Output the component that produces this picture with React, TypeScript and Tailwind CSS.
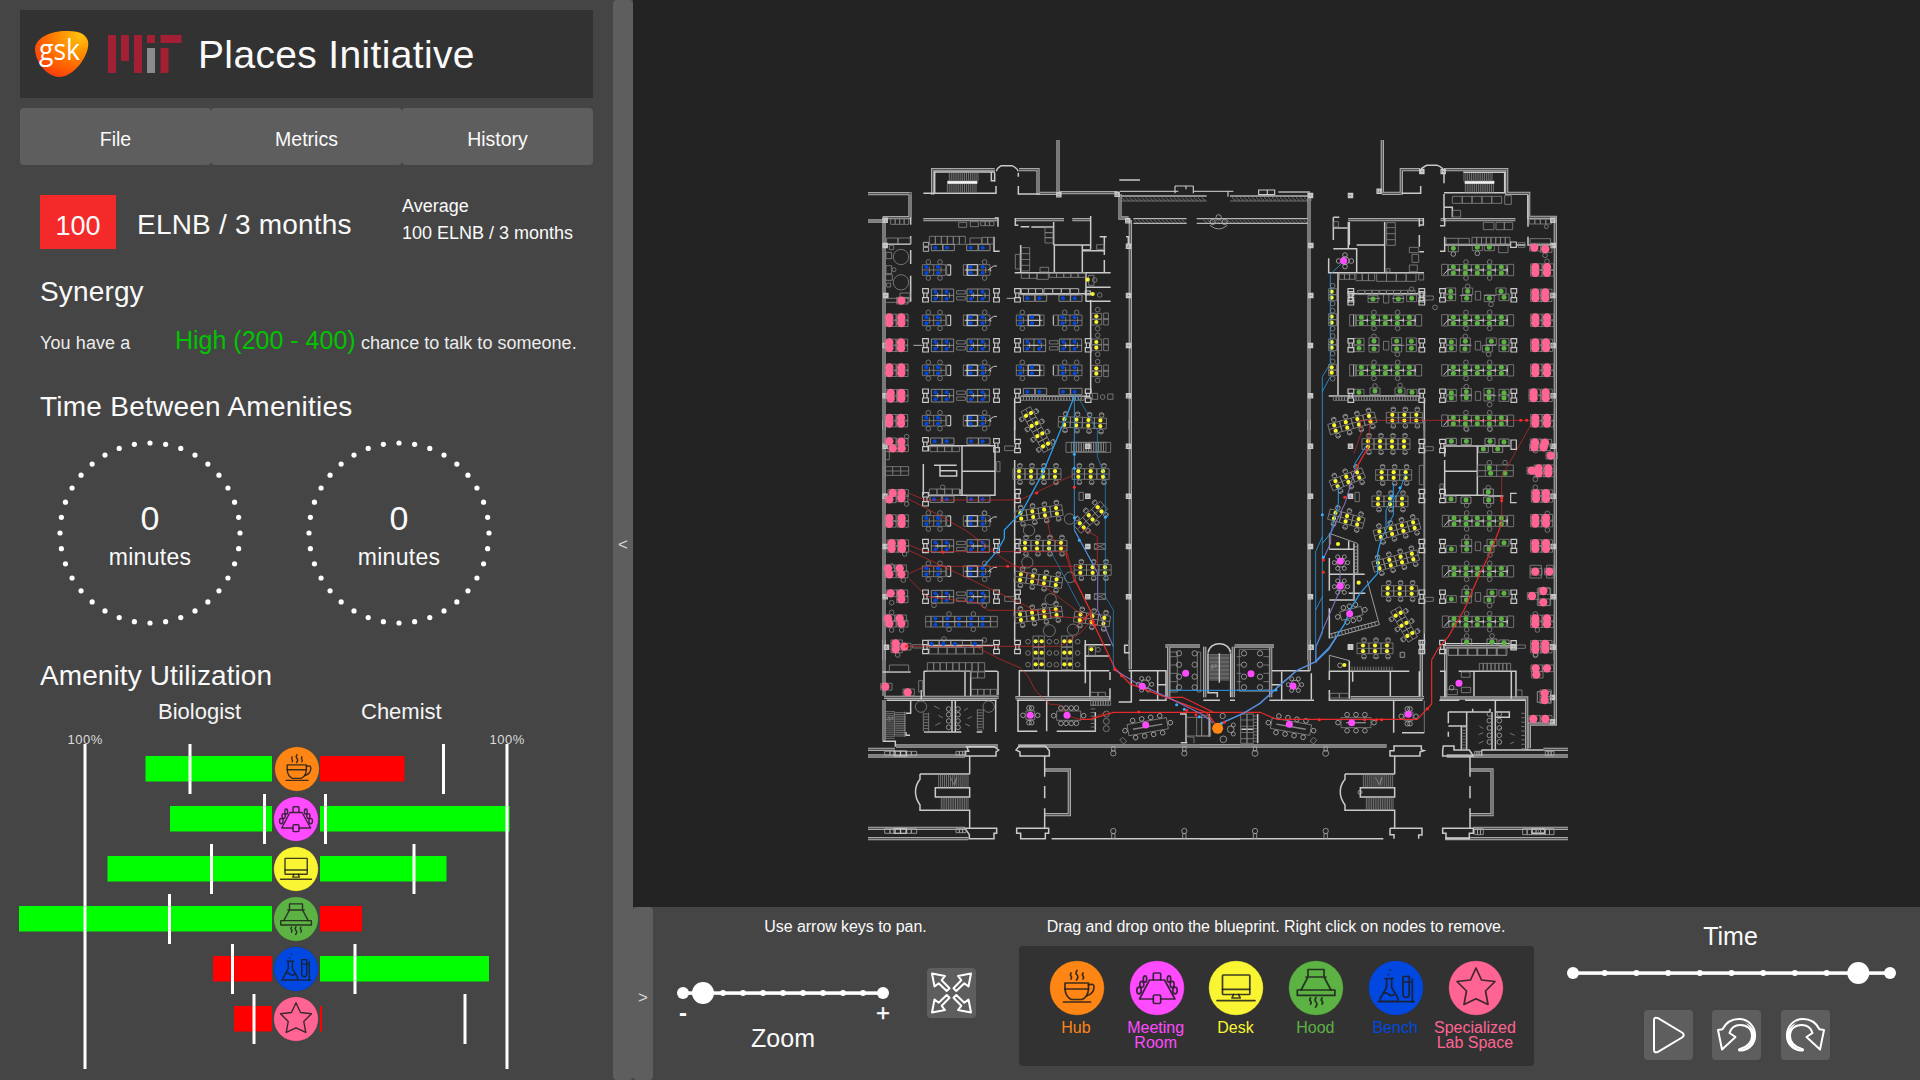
import React from "react";

type Pt = [number, number];

const COLORS = {
  hub: "#ff8514",
  meeting: "#ff4bff",
  desk: "#faf532",
  hood: "#5db244",
  bench: "#0048e0",
  lab: "#ff6492",
};

/* ---------- amenity icons, drawn around the origin in a 27.5 radius ---------- */

type Kind = keyof typeof COLORS;

function Glyph({ kind }: { kind: Kind }) {
  switch (kind) {
    case "hub":
      return (
        <>
          <path d="M-12 -5H11.5V1Q11 9 5 11.5H-5.5Q-11.5 9 -12 1Z" />
          <path d="M-12 1H11.5M-13.5 14H13.5M11.5 -3.2Q17.5 -5 17 -0.5Q16.5 6 9.5 8" />
          <path d="M-6 -15q-1.2 2 0 3.2t0 2.8M0 -17.5q-2 2.5 0 4.5t-0.6 5M6 -15q-1.2 2 0 3.2t0 2.8" />
        </>
      );
    case "meeting":
      return (
        <>
          <path d="M-3.7 -8H-7.5L-17.5 11H-3.7M3.7 11H18L7.5 -8H3.7" />
          <rect x="-3.7" y="-15" width="7.4" height="7" rx="1" />
          <rect x="-3.7" y="7" width="7.4" height="8.5" rx="1.5" />
          {[-1, 1].map((s) => (
            <g key={s}>
              <ellipse cx={12 * s} cy="-9" rx="1.7" ry="3.2" />
              <ellipse cx={15.2 * s} cy="-3.6" rx="2" ry="3" />
              <ellipse cx={18 * s} cy="2.5" rx="2.2" ry="3.3" />
            </g>
          ))}
        </>
      );
    case "desk":
      return (
        <>
          <rect x="-13.5" y="-13" width="27.3" height="19.5" rx="0.8" />
          <path d="M-13.5 1.3H13.8M-2.5 6.5L-4 10H4.2L2.7 6.5M-19 12.6H19" />
        </>
      );
    case "hood":
      return (
        <>
          <path d="M-8 -11V-18.5H8V-11M-10 -11H10M-8 -11L-15 2M8 -11L15 2" />
          <rect x="-18.7" y="2" width="37.6" height="5.4" />
          <path d="M-5.5 10q-1.4 2 0 3.2t0 3M0 9.5q-2 2.5 0 4.5t-0.4 5M6 10q-1.4 2 0 3.2t0 3" />
        </>
      );
    case "bench":
      return (
        <>
          <path d="M-18 13.6H18.2M-10.8 -9.5H-3M-9.5 -9.5V-0.5L-15.8 10.5Q-16.5 13 -14.5 13.3H0.5Q2.5 13 2 10.5L-4.3 -0.5V-9.5M-13 5.5Q-10 4 -7 6.5T-1 5.5" />
          <path d="M7 -11.5H13.2V6.5Q13 9.5 10 9.5T7 6.5ZM7 -6H13.2M16.3 -9V13.5M13.2 -6H16.3" />
          <path d="M-8 -13.5h.1M-5.7 -18h.1" />
        </>
      );
    default:
      return <path d="M0 -20L5.5 -8L19 -6.5L9.5 3L12 16.5L0 10.8L-12 16.5L-9.5 3L-19 -6.5L-5.5 -8Z" />;
  }
}

function Amenity({ kind }: { kind: Kind }) {
  return (
    <g>
      <circle r="27.3" fill={COLORS[kind]} stroke="#2a2a2a" strokeOpacity="0.5" strokeWidth="0.6" />
      <g fill="none" stroke="#1c1c1c" strokeOpacity="0.85" strokeWidth="1.7" strokeLinejoin="round" strokeLinecap="round">
        <Glyph kind={kind} />
      </g>
    </g>
  );
}

/* ---------- sidebar ---------- */

function Logos() {
  return (
    <svg width="162" height="88" viewBox="20 10 162 88">
      <defs>
        <radialGradient id="gsk" cx="0.85" cy="0.1" r="1.05">
          <stop offset="0" stopColor="#ffc20e" />
          <stop offset="0.4" stopColor="#ff8a00" />
          <stop offset="0.75" stopColor="#ff5a00" />
          <stop offset="1" stopColor="#f83a10" />
        </radialGradient>
      </defs>
      <path
        d="M66 31C80 30.5 88.500 35 88.300 44C88 58 73 77 59 77C45 76 35 60 35 49C35.500 38 50 31 66 31Z"
        fill="url(#gsk)"
      />
      <text x="39" y="60" fontFamily="'Open Sans', sans-serif" fontSize="29" textLength="41" lengthAdjust="spacingAndGlyphs" fill="#fff">
        gsk
      </text>
      <g fill="#a31f34">
        <rect x="108" y="35" width="8" height="38" />
        <rect x="121" y="35" width="8" height="26" />
        <rect x="134" y="35" width="8" height="38" />
        <rect x="147" y="35" width="8" height="8" />
        <rect x="160.5" y="35" width="21" height="8" />
        <rect x="160.5" y="48" width="8" height="25" />
      </g>
      <rect x="147" y="48" width="8" height="25" fill="#8a8b8c" />
    </svg>
  );
}

function Ring() {
  return (
    <div className="grid h-[186px] w-[186px]">
      <svg className="col-start-1 row-start-1" width="186" height="186" viewBox="-93 -93 186 186" fill="#fff">
        {Array.from({ length: 36 }, (_, i) => {
          const a = (i * Math.PI) / 18;
          return <circle key={i} cx={90 * Math.sin(a)} cy={90 * Math.cos(a)} r="2.6" />;
        })}
      </svg>
      <div className="col-start-1 row-start-1 flex flex-col items-center pt-[58px]">
        <span className="text-[34px] leading-10">0</span>
        <span className="pt-[3px] text-[23px] leading-8 tracking-[0.3px]">minutes</span>
      </div>
    </div>
  );
}

const rows: { kind: Kind; left: number; lm: number; lOk: boolean; right: number; rm?: number; rOk: boolean }[] = [
  { kind: "hub", left: 145.5, lm: 190, lOk: true, right: 404.5, rm: 443.5, rOk: false },
  { kind: "meeting", left: 170, lm: 264.5, lOk: true, right: 509.5, rm: 325.5, rOk: true },
  { kind: "desk", left: 107.5, lm: 211.5, lOk: true, right: 446.5, rm: 414, rOk: true },
  { kind: "hood", left: 19, lm: 169.5, lOk: true, right: 362, rOk: false },
  { kind: "bench", left: 213, lm: 232.5, lOk: false, right: 489, rm: 355, rOk: true },
  { kind: "lab", left: 234, lm: 254, lOk: false, right: 322, rm: 465, rOk: false },
];

function Utilization() {
  return (
    <svg width="613" height="381" viewBox="0 699 613 381" fontFamily="'Liberation Sans', Arial, sans-serif">
      <g fill="#f4f4f4" fontSize="22">
        <text x="158" y="719">Biologist</text>
        <text x="361" y="719">Chemist</text>
      </g>
      <g fill="#dcdcdc" fontSize="13" letterSpacing="0.5">
        <text x="67.5" y="744">100%</text>
        <text x="489.5" y="744">100%</text>
      </g>
      {rows.map((r, i) => {
        const y = 756 + i * 50;
        return (
          <g key={r.kind}>
            <rect x={r.left} y={y} width={272 - r.left} height="25.5" fill={r.lOk ? "#00ff00" : "#ff0000"} />
            <rect x="320" y={y} width={r.right - 320} height="25.5" fill={r.rOk ? "#00ff00" : "#ff0000"} />
            <rect x={r.lm - 1.5} y={y - 12} width="3" height="50" fill="#fff" />
            {r.rm && <rect x={r.rm - 1.5} y={y - 12} width="3" height="50" fill="#fff" />}
            <g transform={`translate(${i === 0 ? 297 : 296} ${y + 13}) scale(0.815)`}>
              <Amenity kind={r.kind} />
            </g>
          </g>
        );
      })}
      <rect x="83.5" y="744" width="3" height="325" fill="#fff" />
      <rect x="505.5" y="744" width="3" height="325" fill="#fff" />
    </svg>
  );
}

function Sidebar() {
  return (
    <aside className="flex h-full w-[633px] shrink-0 bg-[#454545]">
      <div className="flex w-[613px] flex-col pt-[10px]">
        <header className="mx-5 flex h-[88px] w-[573px] items-center bg-[#323232]">
          <Logos />
          <h1 className="pl-4 pt-px text-[39px] leading-none tracking-[0.35px] whitespace-nowrap">Places Initiative</h1>
        </header>
        <nav className="mx-5 mt-[10px] flex h-[57px] w-[573px]">
          {["File", "Metrics", "History"].map((t) => (
            <button key={t} className="flex flex-1 items-center justify-center rounded-[4px] bg-[#5e5e5e] pt-[7px] text-[19.5px] leading-none">
              {t}
            </button>
          ))}
        </nav>
        <div className="mt-[30px] flex h-[54px] pl-10">
          <div className="flex h-[54px] w-[76px] items-center justify-center bg-[#f42a2a] pt-[8px] text-[27px] leading-none">100</div>
          <div className="flex w-[266px] items-center pl-[21px] pt-[6px] text-[28px] leading-none tracking-[0.2px] whitespace-nowrap">ELNB / 3 months</div>
          <div className="-mt-[2px] pl-[20px] text-[18px] leading-[27px] whitespace-nowrap">
            <div>Average</div>
            <div>100 ELNB / 3 months</div>
          </div>
        </div>
        <h2 className="mt-[26px] h-[34px] pl-10 text-[28px] leading-[34px] tracking-[0.15px]">Synergy</h2>
        <p className="mt-[16px] flex h-[30px] items-baseline pl-10 text-[18px] leading-[30px] whitespace-nowrap text-[#ececec]">
          <span className="w-[135px] tracking-[0.1px]">You have a</span>
          <span className="w-[186px] text-[25px] text-[#00c400]">High (200 - 400)</span>
          <span className="tracking-[0.02px]">chance to talk to someone.</span>
        </p>
        <h2 className="mt-[35px] h-[34px] pl-10 text-[28px] leading-[34px] tracking-[0.25px]">Time Between Amenities</h2>
        <div className="mt-[16px] flex h-[186px] gap-[63px] pl-[57px]">
          <Ring />
          <Ring />
        </div>
        <h2 className="mt-[33px] h-[34px] pl-10 text-[28px] leading-[34px] tracking-[0.1px]">Amenity Utilization</h2>
        <div className="mt-[6px] h-[381px]">
          <Utilization />
        </div>
      </div>
      <button className="flex w-5 items-center justify-center rounded-[4px] bg-[#5e5e5e] pt-[8px] text-[17px] leading-none text-[#d8d8d8]">&lt;</button>
    </aside>
  );
}

/* ---------- blueprint ---------- */

const WALL = { stroke: "#cacaca", strokeWidth: 4.5, fill: "none" };
const THIN = { stroke: "#868686", strokeWidth: 2.4, fill: "none" };

function Double({ d }: { d: string }) {
  return (
    <g fill="none">
      <path d={d} stroke="#a8a8a8" strokeWidth="10" />
      <path d={d} stroke="#565656" strokeWidth="3.5" />
    </g>
  );
}

const box = (x: number, y: number, w: number, h: number) => `M${x} ${y}h${w}v${h}h${-w}z`;
const ring = (x: number, y: number, r = 7) => `M${x - r} ${y}a${r} ${r} 0 1 0 ${2 * r} 0a${r} ${r} 0 1 0 ${-2 * r} 0`;

function Dots({ at, fill, r }: { at: Pt[]; fill: string; r: number }) {
  return (
    <g fill={fill}>
      {at.map(([x, y], i) => (
        <circle key={i} cx={x} cy={y} r={r} />
      ))}
    </g>
  );
}

const pairs = (xs: number[], y: number, dy: number): Pt[] => xs.flatMap((x): Pt[] => [[x, y - dy], [x, y + dy]]);

/* open-plan desk group: n columns with two facing seats each */
function Cluster({ x, y, n, a = 0, p = 36 }: { x: number; y: number; n: number; a?: number; p?: number }) {
  const xs = Array.from({ length: n }, (_, i) => (i - (n - 1) / 2) * p);
  return (
    <g transform={`translate(${x} ${y}) rotate(${a})`}>
      <path {...THIN} d={xs.map((v) => box(v - p / 2, -16, p, 32)).join("") + `M${xs[0] - p / 2} 0H${xs[n - 1] + p / 2}`} />
      <path {...THIN} stroke="#9a9a9a" d={xs.map((v) => ring(v + 3, -25) + ring(v + 3, 25) + `M${v - 4} -28h14M${v - 4} 28h14`).join("")} />
      <Dots at={pairs(xs, 0, 8.5)} fill={COLORS.desk} r={6.3} />
    </g>
  );
}

/* storage units bounding a bay */
const cab = (x: number, y: number) => box(x, y - 20, 17, 13) + box(x, y + 7, 17, 13) + `M${x + 3} ${y - 7}v14M${x + 13} ${y - 7}v14`;

function BlueA({ y, mirror = false }: { y: number; mirror?: boolean }) {
  const xs = mirror ? [481, 516, 608, 644] : [199, 234, 332, 368];
  return (
    <g>
      <path
        {...THIN}
        d={
          [0, 1].map((k) => box(xs[2 * k] - 12, y - 16, 70, 32) + `M${xs[2 * k] - 12} ${y}h70M${xs[2 * k] + 22} ${y - 16}v32`).join("") +
          xs.filter((_, i) => i !== (mirror ? 1 : 2)).map((v) => ring(v + 6, y - 24) + ring(v + 6, y + 24) + `M${v + 9} ${y - 10}v20`).join("") +
          box(mirror ? 540 : 260, y - 16, 12, 32) + box(mirror ? 580 : 310, y - 16, 14, 32)
        }
      />
      <path
        {...WALL}
        strokeWidth={3}
        d={
          mirror
            ? `M505 ${y - 16}h34v32h-34zM505 ${y}h42M580 ${y - 14}v28`
            : `M322 ${y - 16}h30v32h-30zM314 ${y}h38M262 ${y - 15}h10v30h-10M385 ${y}l16 -12h10M392 ${y - 2}v6`
        }
      />
      <Dots at={pairs(xs, y, 9)} fill={COLORS.bench} r={6} />
    </g>
  );
}

function BlueB({ y, right = false }: { y: number; right?: boolean }) {
  const xs = right ? [502, 538, 610, 644] : [226, 260, 333, 368];
  return (
    <g>
      <path
        {...THIN}
        stroke="#a0a0a0"
        d={[0, 2].map((k) => box(xs[k] - 12, y - 19, 67, 38) + `M${xs[k] - 12} ${y}h67M${xs[k] + 20} ${y - 19}v38M${xs[k] + 7} ${y - 8}v16M${xs[k] + 42} ${y - 8}v16`).join("")}
      />
      <path {...THIN} d={box(xs[1] + 30, y - 14, 26, 10) + box(xs[1] + 30, y + 4, 26, 10)} />
      <path {...WALL} strokeWidth={3.5} d={right ? cab(464, y) + cab(676, y) : cab(188, y) + cab(401, y)} />
      <path {...WALL} strokeWidth={3} d={`M${xs[0]} ${y}h34M${xs[2]} ${y}h34`} />
      <Dots at={pairs(xs, y, 10.5)} fill={COLORS.bench} r={6} />
    </g>
  );
}

function BlueSingle({ y, xs }: { y: number; xs: number[] }) {
  return (
    <g>
      <path {...THIN} stroke="#a0a0a0" d={xs.map((v) => box(v - 12, y - 10, 34, 19)).join("")} />
      <Dots at={xs.map((v): Pt => [v, y])} fill={COLORS.bench} r={6} />
    </g>
  );
}

function GreenFull({ y, xs, rightBlock = false }: { y: number; xs: number[]; rightBlock?: boolean }) {
  const a = xs[0] - 15;
  const w = xs[xs.length - 1] - xs[0] + 30;
  return (
    <g>
      <path
        {...THIN}
        d={
          box(a - 20, y - 17, 18, 34) +
          box(a, y - 16, w, 32) +
          `M${a} ${y}h${w}` +
          xs.map((v) => `M${v + 18} ${y - 16}v32`).join("") +
          box(a + w + 4, y - 17, 18, 34) +
          ring(xs[1] + 2, y - 24) +
          ring(xs[1] + 2, y + 24) +
          ring(xs[3] + 1, y - 24) +
          ring(xs[3] + 1, y + 24)
        }
      />
      <path
        {...WALL}
        strokeWidth={3}
        d={xs.map((v) => `M${v + 4} ${y}h14M${v + 18} ${y - 5}v10`).join("") + (rightBlock ? `M${a - 14} ${y + 14}l14 -16h8` : `M${a - 8} ${y - 16}v32`)}
      />
      <Dots at={pairs(xs, y, 9)} fill={COLORS.hood} r={7.5} />
    </g>
  );
}

function GreenMixed({ y, pts, a, b }: { y: number; pts: Pt[]; a: number; b: number }) {
  return (
    <g>
      <path
        {...THIN}
        d={
          pts.map(([px, py]) => box(px - 15, py - 10, 30, 20)).join("") +
          box((a + b) / 2, y - 12, 16, 26) +
          ring(pts[2] ? pts[2][0] : a + 70, y - 27) +
          ring(pts[2] ? pts[2][0] + 70 : a + 140, y + 27)
        }
      />
      <path {...WALL} stroke="#aaa" strokeWidth={2.5} d={`M${a + 60} ${y}h36M${b - 80} ${y}h36`} />
      <path {...WALL} strokeWidth={3.5} d={cab(a, y) + cab(b, y)} />
      <Dots at={pts} fill={COLORS.hood} r={7.5} />
    </g>
  );
}

function Pink({ at }: { at: Pt[] }) {
  return (
    <g>
      <path {...THIN} d={at.map(([x, y]) => box(x - 14, y - 10, 34, 20)).join("")} />
      <Dots at={at} fill={COLORS.lab} r={12.5} />
    </g>
  );
}

const pinkRow = (y: number, a: number, b: number): Pt[] => pairs([a, b], y, 8.5);

/* horizontal strip of equal boxes */
const strip = (x: number, y: number, w: number, h: number, n: number) =>
  Array.from({ length: n }, (_, i) => box(x + (i * w) / n, y, w / n, h)).join("");

/* dense parallel treads */
const treads = (x: number, y: number, w: number, h: number, n: number) =>
  Array.from({ length: n }, (_, i) => `M${x + (i * w) / (n - 1)} ${y}v${h}`).join("");
const rungs = (x: number, y: number, w: number, h: number, n: number) =>
  Array.from({ length: n }, (_, i) => `M${x} ${y + (i * h) / (n - 1)}h${w}`).join("");

/* conference table with chairs on both sides */
function Conference({ x, y, a = 0, n = 4, w = 110, h = 30 }: { x: number; y: number; a?: number; n?: number; w?: number; h?: number }) {
  const xs = Array.from({ length: n }, (_, i) => (i - (n - 1) / 2) * ((w - 10) / n));
  return (
    <g transform={`translate(${x} ${y}) rotate(${a})`}>
      <path {...THIN} d={box(-w / 2, -h / 2, w, h)} />
      <path {...THIN} stroke="#b0b0b0" d={xs.map((v) => ring(v, -h / 2 - 9) + ring(v, h / 2 + 9)).join("") + ring(-w / 2 - 9, 0) + ring(w / 2 + 9, 0)} />
      {w > 80 && <path {...THIN} strokeWidth={4} d={`M${-w / 2 + 15} 0h${w - 30}`} />}
    </g>
  );
}

function Round({ x, y }: { x: number; y: number }) {
  return (
    <path
      {...THIN}
      stroke="#b0b0b0"
      d={ring(x, y, 13) + [0, 60, 120, 180, 240, 300].map((d) => ring(x + 20 * Math.cos((d * Math.PI) / 180), y + 20 * Math.sin((d * Math.PI) / 180), 6)).join("")}
    />
  );
}

function Column({ at }: { at: Pt[] }) {
  return <path {...WALL} strokeWidth={3.5} d={at.map(([x, y]) => box(x - 7, y - 6, 13, 13) + box(x - 3, y - 3, 6, 6)).join("")} />;
}

function WestTop() {
  return (
    <g>
      <Double d="M24 191H154M150 187V262M68 263H154M24 273H70M72 263V900M218 194V119H404M477 119H534V190H594M594 30V190M596 188H772M780 192V264H806M811 270V900M190 269H413M466 269H612M637 269H690" />
      <path {...WALL} d="M224 190V126H405M190 190H408V168M404 128V155M394 128V152H406M475 128V140M475 168V192H540M410 124C408 118 416 112 424 107H456C466 112 474 118 474 124M692 258V358M692 510V790M464 808V900M402 320V364H419M152 262V284M152 318V343M152 360V402M152 437V515M76 343H152M482 290H508M514 291H581M581 276V345M691 345H583V428M583 345H667V428M667 360H692M667 362H733V375M733 390V428M464 428H752M678 430V515M678 472H752M678 514H752M719 320H740M733 320V365M798 320H805V345M482 345V428M480 491H692M482 799H690M778 150H840M475 286H466V264M404 264H414V290" />
      <path stroke="#f4f4f4" strokeWidth="9" d="M262 157H352" />
      <path
        {...THIN}
        d={
          treads(268, 128, 86, 26, 16) + treads(262, 162, 86, 26, 16) + strip(92, 265, 54, 18, 4) + box(80, 324, 33, 18) + box(115, 324, 36, 18) +
          strip(208, 319, 108, 24, 6) + box(330, 324, 35, 18) + strip(366, 322, 34, 20, 2) + box(296, 277, 24, 15) + box(331, 275, 24, 15) +
          strip(362, 275, 40, 12, 3) + ring(123, 381, 23) + ring(123, 457, 23) + box(78, 367, 17, 19) + box(78, 407, 17, 24) + ring(102, 419, 6) +
          box(88, 346, 13, 13) + box(77, 434, 20, 17) + box(80, 459, 12, 12) + box(120, 489, 30, 14) + box(76, 505, 72, 12)
        }
      />
      <path
        {...THIN}
        d={
          box(555, 293, 24, 15) + box(555, 308, 24, 15) + box(555, 323, 24, 16) + box(484, 353, 25, 70) + rungs(484, 371, 25, 35, 3) +
          box(466, 373, 14, 44) + strip(484, 430, 48, 15, 2) + box(530, 430, 35, 18) + strip(568, 429, 108, 13, 5) + box(540, 412, 26, 14) +
          box(710, 344, 22, 14) + ring(704, 450, 7) + ring(719, 495, 7) + box(686, 436, 16, 30) + box(697, 790, 16, 18) + ring(728, 801, 7) +
          box(743, 792, 16, 16) + strip(482, 799, 190, 12, 22)
        }
      />
      <path {...WALL} stroke="#b0b0b0" strokeWidth={3} d={strip(484, 476, 64, 18, 3) + strip(552, 476, 104, 18, 4) + box(190, 337, 16, 12) + box(190, 352, 16, 12) + "M440 505H464M160 646H188"} />
      {[559, 576, 636, 653, 715, 731].map((y, i) => (
        <path key={y} {...THIN} d={box(695, y - 9, 30, 18) + box(731, y - 10, 14, 19) + ring(713, i % 2 ? y + 20 : y - 20, 7)} />
      ))}
      <Column at={[[76, 346], [76, 270], [78, 496], [76, 646], [76, 797], [806, 348], [806, 496], [806, 646], [806, 797], [597, 194], [772, 192], [804, 272]]} />
      <BlueSingle y={353} xs={[226, 261, 332, 368]} />
      {[420, 571, 721, 872].map((y) => (
        <BlueA key={y} y={y} />
      ))}
      {[496, 646, 797].map((y) => (
        <BlueB key={y} y={y} />
      ))}
      <path {...WALL} strokeWidth={3.5} d={cab(464, 496) + box(676, 483, 15, 12) + cab(464, 797) + cab(676, 797)} />
      <BlueSingle y={505} xs={[502, 538, 609, 644]} />
      <BlueA y={571} mirror />
      <BlueB y={646} right />
      <BlueA y={721} mirror />
      <BlueSingle y={785} xs={[502, 538, 609, 644]} />
      <Dots fill={COLORS.desk} r={6.3} at={[[683, 449], [698, 492], [709, 559], [709, 576], [709, 636], [709, 653], [709, 715], [709, 731]]} />
      <Pink at={[[124, 512], ...pinkRow(571, 88, 124), ...pinkRow(646, 88, 123), ...pinkRow(721, 88, 124), ...pinkRow(797, 92, 124), ...pinkRow(872, 88, 123)]} />
    </g>
  );
}

function WestMid() {
  return (
    <g transform="translate(0 870)">
      <Double d="M72 0V720M811 0V720" />
      <path {...WALL} d="M464 0V65M464 120V665M190 132V225M205 77H405V226H205M306 77V226M306 154H405M222 136H290M238 152H290V168H240V138M205 77V92M300 208V222M676 672V790M676 674H752M804 676H794V698H808" />
      <path
        {...THIN}
        d={
          strip(210, 80, 88, 15, 4) + strip(208, 207, 92, 18, 4) + box(76, 140, 70, 26) + "M98 140v26M122 140v26M76 153h70" + box(76, 95, 12, 24) +
          box(618, 67, 134, 30) + strip(634, 67, 104, 28, 14) + box(657, 217, 13, 24) + ring(629, 297, 16) + ring(507, 331, 17) + ring(502, 427, 17) +
          ring(630, 472, 16) + ring(572, 538, 17) + ring(568, 632, 18) + ring(639, 629, 17) + box(703, 371, 33, 17) + box(703, 521, 33, 17) +
          "M703 371l33 17M703 388l33 -17M703 521l33 17M703 538l33 -17" + strip(208, 682, 160, 20, 6) + box(158, 674, 30, 10) + box(434, 78, 30, 14) +
          box(434, 530, 30, 14) + box(410, 125, 10, 30) + box(686, 680, 20, 26) + ring(714, 689, 7)
        }
      />
      <path
        {...THIN}
        d={[[140, 50], [248, 202], [140, 252], [373, 280], [134, 402], [130, 480], [95, 438], [222, 556], [373, 556], [95, 548], [267, 582], [267, 628], [340, 582], [340, 628], [95, 577], [95, 630], [125, 630], [252, 657], [373, 660], [113, 705]]
          .map(([x, y]) => ring(x, y, 7))
          .join("")}
      />
      <path
        {...WALL}
        strokeWidth={3.5}
        d={cab(188, 73) + cab(401, 76) + cab(188, 238) + cab(464, 78) + cab(464, 228) + cab(464, 378) + cab(464, 530) + cab(464, 681) + cab(401, 681) + cab(188, 681) + "M205 676H400M205 661H370"}
      />
      <BlueSingle y={64} xs={[224, 260, 333, 368]} />
      <BlueSingle y={238} xs={[222, 260, 333, 368]} />
      <BlueA y={303} />
      <BlueB y={378} />
      <BlueA y={454} />
      <BlueB y={530} />
      <path {...THIN} d={strip(213, 589, 178, 32, 5) + "M197 605H412" + box(197, 589, 16, 32) + box(392, 589, 20, 32)} />
      <path {...WALL} strokeWidth={3} stroke="#a8a8a8" d="M226 605H390" />
      <Dots fill={COLORS.bench} r={6} at={pairs([226, 262, 297, 333, 368], 605, 9.5)} />
      <BlueSingle y={671} xs={[215, 250, 285, 345]} />
      <Cluster x={667} y={8} n={4} a={2} />
      <Cluster x={531} y={29} n={4} a={61} p={35} />
      <Cluster x={531} y={162} n={4} />
      <Cluster x={692} y={162} n={3} p={37} />
      <Cluster x={536} y={280} n={4} a={-8} />
      <Cluster x={692} y={292} n={3} a={-42} />
      <Cluster x={549} y={377} n={4} />
      <Cluster x={698} y={450} n={3} p={37} />
      <Cluster x={535} y={479} n={4} a={8} />
      <Cluster x={535} y={584} n={4} a={-8} />
      <Cluster x={696} y={597} n={3} a={8} />
      {[664, 698, 733].map((y) => (
        <g key={y}>
          <path {...THIN} d={[536, 621].map((x) => box(x - 17, y - 16, 34, 32) + `M${x} ${y - 16}v32` + ring(x - 32, y + 1) + ring(x + 32, y + 1)).join("")} />
          <Dots fill={COLORS.desk} r={6.3} at={[[527, y], [545, y], [613, y], [630, y]]} />
        </g>
      ))}
      <Dots fill={COLORS.desk} r={6.3} at={[[694, 688]]} />
      <Column at={[[76, 78], [76, 228], [76, 379], [76, 530], [80, 681], [806, 78], [806, 228], [806, 379], [806, 530], [684, 78], [684, 228], [684, 379], [684, 530]]} />
      <Pink
        at={[
          [88, 64], [124, 65], [98, 85], [125, 85], [98, 219], [125, 219], [88, 238], [124, 235],
          ...pinkRow(303, 88, 125), ...pinkRow(378, 95, 126),
          [84, 445], [88, 463], [119, 445], [124, 463], [92, 520], [123, 520], [124, 538], [84, 595], [88, 611], [119, 595], [124, 611],
          [107, 670], [107, 688], [133, 680],
        ]}
      />
    </g>
  );
}

function WestBottom() {
  return (
    <g transform="translate(0 1530)">
      <Double d="M72 0V168M811 0V88M72 172H416M466 173H750M72 180V302M108 318H414M474 318H1140M24 328H105M24 348H315M24 565H315M24 596H325M916 18H1020M926 20V172M554 390H628V524H554" />
      <path {...WALL} d="M192 93V168M192 94H332M315 94V168M332 94V168M414 94V166M374 94H412M68 96H152M476 92H748M478 94V168M565 94V170M690 94V172M184 178V150M80 181H410M276 181V276M286 181V276M192 276H304M350 276H367M407 181V276M474 180V274H532M590 274H706V216M560 182V274M470 181H752M750 96V120M750 145V178M676 0V94M676 48H750M806 92H920M776 186H814V92M893 92V180M918 92V180M838 181H920M893 134H920M152 182V220H138M138 276V286H150M68 304H106V320M320 320H402L416 330L408 336V348H316V334H326ZM478 318H556L568 332V348H480V336L468 330ZM329 350V403M554 350V410M554 438V475M554 505V565M315 565H410V580H402V596H328V584ZM470 565H566V580H556V596H482V580H470ZM180 402H329M180 402V418C162 440 162 470 180 495V511H329V565M226 443H329V471H226ZM960 222H980M978 222V308M962 308H982M1048 222V290M575 596H1140" />
      <path
        {...THIN}
        d={
          box(88, 75, 58, 20) + strip(202, 68, 172, 26, 9) + strip(332, 96, 42, 18, 2) + strip(334, 148, 76, 18, 4) + box(176, 122, 12, 34) +
          rungs(76, 215, 28, 80, 14) + rungs(106, 218, 32, 70, 14) + "M104 215V290M134 215V290" + ring(183, 200, 17) + ring(386, 200, 17) +
          rungs(192, 222, 14, 52, 7) + rungs(352, 210, 16, 60, 8) +
          "M190 218V274M206 218V274M352 208V268M370 208V268M222 198l16 8M235 226l14 8M226 256l16 -8M324 204l-12 8M336 230l-14 6M330 258l-14 -6" +
          strip(692, 182, 60, 14, 8) + rungs(692, 196, 14, 76, 8) + strip(692, 157, 44, 14, 2) + [0, 1, 2].map((k) => ring(739, 222 + k * 22, 9)).join("") +
          treads(236, 404, 88, 38, 16) + treads(244, 474, 80, 36, 16) + box(930, 36, 22, 120) + rungs(930, 50, 22, 100, 5) + box(1012, 36, 10, 120)
        }
      />
      <path
        {...THIN}
        stroke="#a8a8a8"
        d={
          [207, 224, 243, 262].map((y) => ring(266, y, 7) + ring(294, y, 7)).join("") +
          [40, 74, 110, 142].map((y) => ring(957, y, 8) + ring(1004, y, 8)).join("") +
          [760, 973].map((x) => ring(x, 340, 8) + box(x - 5, 320, 10, 13) + ring(x, 573, 8) + box(x - 5, 581, 10, 14)).join("") +
          strip(74, 334, 96, 13, 6) + strip(288, 334, 30, 12, 3) + strip(74, 566, 96, 14, 6) + strip(288, 566, 30, 12, 3)
        }
      />
      <path {...WALL} strokeWidth={3} d={box(102, 333, 38, 15) + box(102, 566, 38, 14) + "M121 333v15M121 566v14"} />
      <path {...THIN} d="M270 410l12 24l8 -22l-6 24M1052 86l20 -8M80 240l8 -10v12l10 -12v10" />
      <Conference x={511} y={226} w={26} h={26} n={2} />
      <Conference x={626} y={227} w={72} h={28} n={4} />
      <Conference x={863} y={260} a={-10} w={120} h={34} n={4} />
      <Round x={855} y={133} />
      <path {...THIN} d={box(980, 232, 45, 56) + box(1025, 226, 22, 62) + "M980 290L1002 292V310M788 292l12 12l-9 8l-12 -12z"} />
      <Pink at={[[76, 140], [143, 157]]} />
    </g>
  );
}

function EastTop() {
  return (
    <g transform="translate(1290 0)">
      <Double d="M334 194V119H390M462 119H650V190H716V262H796V900M277 30V186M57 188V900M174 269H400M452 269H676M276 190H334" />
      <path {...WALL} d="M520 127H644V188H462M334 190H392V168M392 118V130M462 128V160M462 192V232H487V262M462 232V270M392 122C392 114 402 110 410 106H442C452 110 460 116 460 122M714 195V290M714 320V345H790M388 264V290M400 264V285H390M464 264V287H450M130 262V330M130 262H148M132 294H172M130 356H200V428M175 276V356M200 345H284V276M178 276V345M284 345V428H116V385M284 428H402M388 315V350M388 365H402M464 320V364H450M466 345H660M680 345H706M174 491H384M116 798H390M144 430V795M403 808V900" />
      <path stroke="#f4f4f4" strokeWidth="9" d="M524 157H613" />
      <path
        {...THIN}
        d={
          treads(522, 129, 84, 26, 16) + treads(526, 162, 84, 26, 16) + strip(487, 199, 148, 21, 5) + box(644, 197, 20, 26) + box(488, 241, 24, 20) +
          box(580, 277, 32, 22) + strip(618, 277, 50, 22, 2) + box(290, 278, 26, 68) + rungs(290, 293, 26, 36, 3) + box(358, 352, 28, 16) +
          box(366, 373, 20, 24) + box(358, 405, 24, 20) + strip(148, 432, 46, 16, 3) + strip(198, 430, 56, 22, 3) + strip(260, 430, 118, 24, 4) +
          box(386, 432, 15, 18) + strip(203, 481, 172, 13, 8) + strip(130, 800, 42, 11, 5) + strip(190, 799, 196, 12, 24) +
          strip(546, 322, 114, 20, 8) + box(468, 325, 70, 17) + "M505 325v17" + strip(718, 268, 66, 14, 4) + box(720, 326, 62, 14) +
          ring(769, 290, 6) + ring(765, 376, 7) + ring(771, 394, 7) + box(131, 275, 14, 16) + box(404, 498, 26, 12) + box(685, 338, 20, 14) +
          box(626, 342, 28, 26) + box(290, 416, 10, 10)
        }
      />
      <path {...THIN} stroke="#b0b0b0" d={ring(165, 392, 12) + ring(165, 375) + ring(165, 410) + ring(146, 393) + ring(184, 393) + ring(490, 372) + ring(562, 370)} />
      {[485, 503, 560, 578, 636, 653, 712, 728].map((y, i) => (
        <path key={y} {...THIN} d={box(116, y - 9, 24, 18) + ring(128, i % 2 ? y + 18 : y - 18, 7)} />
      ))}
      <path {...WALL} strokeWidth={3.5} d={cab(174, 496) + cab(387, 496) + cab(174, 797) + cab(387, 797) + box(662, 336, 17, 16)} />
      <GreenMixed y={505} a={174} b={387} pts={[[249, 507], [325, 507], [365, 505]]} />
      <GreenFull y={571} xs={[214, 250, 286, 322, 358]} />
      <GreenMixed y={646} a={174} b={387} pts={[[207, 635], [207, 655], [252, 633], [252, 656], [320, 633], [320, 656], [364, 634], [364, 655]]} />
      <GreenFull y={721} xs={[214, 250, 286, 322, 358]} />
      <path
        {...THIN}
        d={[[207, 787], [255, 783], [330, 783], [366, 787], [490, 355], [562, 352], [598, 352]].map(([x, y]) => box(x - 15, y - 9, 30, 19)).join("") + ring(255, 768) + ring(330, 766)}
      />
      <Dots fill={COLORS.hood} r={7.5} at={[[207, 787], [255, 783], [330, 783], [366, 787], [490, 355], [562, 352], [598, 352]]} />
      {[420, 571, 721, 872].map((y) => (
        <GreenFull key={y} y={y} rightBlock xs={[490, 526, 562, 598, 634]} />
      ))}
      <GreenMixed y={496} a={449} b={663} pts={[[482, 484], [482, 502], [533, 484], [530, 505], [598, 505], [633, 484], [642, 502]]} />
      <GreenMixed y={646} a={449} b={663} pts={[[484, 636], [484, 655], [526, 634], [525, 656], [604, 634], [592, 656], [642, 636], [642, 655]]} />
      <GreenMixed y={797} a={449} b={663} pts={[[484, 788], [484, 804], [529, 785], [529, 803], [597, 785], [597, 803], [642, 788], [642, 804]]} />
      <Cluster x={187} y={880} n={4} a={-15} />
      <Cluster x={343} y={863} n={3} />
      <Dots fill={COLORS.desk} r={6.3} at={[[125, 485], [125, 503], [125, 560], [125, 578], [125, 636], [125, 653], [125, 712], [125, 728]]} />
      <Column at={[[62, 196], [182, 196], [268, 183], [63, 346], [63, 496], [62, 646], [62, 797], [789, 270], [790, 346], [789, 496], [790, 646], [790, 797], [396, 124], [460, 124]]} />
      <Pink
        at={[
          [733, 353], [766, 357],
          ...pinkRow(420, 736, 771), ...pinkRow(496, 736, 766), ...pinkRow(571, 736, 771), ...pinkRow(646, 736, 768),
          ...pinkRow(721, 736, 771), ...pinkRow(796, 731, 767), ...pinkRow(872, 736, 771),
        ]}
      />
    </g>
  );
}

function EastMid() {
  const full = [492, 528, 562, 598, 634];
  return (
    <g transform="translate(1290 870)">
      <Double d="M57 0V720M796 0V720" />
      <path {...WALL} stroke="#8c8c8c" strokeWidth={6} d="M403 0V640" />
      <path {...WALL} d="M464 78H562V226H464V120M464 154H562M464 78V110M464 226H596M480 78H660M596 228H640M118 388H192M192 370V540H118M118 414V512M118 463H224M118 565V655M176 362V386M176 520H226M403 640V700" />
      <path {...WALL} stroke="#9c9c9c" strokeWidth={3} d="M118 388V340L202 370V460M118 655L268 614L232 482M190 460V540M120 642L262 604" />
      <path {...THIN} stroke="#9c9c9c" d={"M192 372v90M204 372v90" + rungs(192, 380, 12, 78, 9) + Array.from({ length: 14 }, (_, i) => `M${124 + i * 10} ${640 - i * 2.6}l3 12`).join("")} />
      <path
        {...THIN}
        d={
          strip(475, 684, 176, 22, 6) + box(388, 136, 14, 58) + box(195, 217, 13, 28) + box(330, 697, 13, 15) + box(562, 135, 108, 34) +
          "M562 152h108M586 135v34M620 135v34" + box(720, 436, 34, 38) + box(770, 436, 20, 38) + box(742, 506, 40, 50) + box(404, 80, 26, 12) +
          box(404, 532, 26, 12) + box(680, 675, 26, 10) + box(450, 192, 10, 14)
        }
      />
      <path
        {...THIN}
        d={[[530, 28], [600, 28], [598, 128], [645, 128], [595, 203], [530, 256], [596, 256], [736, 92], [736, 178], [736, 202], [772, 280], [772, 330], [736, 582], [736, 706], [530, 648], [606, 648], [742, 630]]
          .map(([x, y]) => ring(x, y, 7))
          .join("")}
      />
      <path
        {...WALL}
        strokeWidth={3.5}
        d={cab(387, 78) + cab(387, 228) + cab(387, 378) + cab(387, 530) + cab(387, 681) + cab(449, 78) + cab(449, 228) + cab(449, 681) + box(663, 60, 16, 28) + box(663, 662, 16, 28) + "M660 220h20M660 248h20M662 220v28M466 671H660"}
      />
      <path
        {...THIN}
        stroke="#a0a0a0"
        d={[[484, 64], [529, 64], [600, 64], [642, 66], [580, 87], [623, 87], [595, 216], [483, 237], [528, 240], [596, 240], [530, 666], [606, 666], [642, 669]]
          .map(([x, y]) => box(x - 15, y - 9, 30, 19))
          .join("")}
      />
      <Dots
        fill={COLORS.hood}
        r={7.5}
        at={[[484, 64], [529, 64], [600, 64], [642, 66], [580, 87], [623, 87], [598, 143], [602, 160], [645, 160], [595, 216], [483, 237], [528, 240], [596, 240], [530, 666], [606, 666], [642, 669]]}
      />
      <GreenFull y={303} xs={full} rightBlock />
      <GreenMixed y={378} a={449} b={663} pts={[[484, 387], [530, 368], [530, 388], [606, 368], [597, 387], [642, 368]]} />
      <GreenFull y={454} xs={full} rightBlock />
      <GreenMixed y={530} a={449} b={663} pts={[[484, 537], [531, 518], [529, 539], [606, 518], [597, 539], [642, 520]]} />
      <GreenFull y={605} xs={full} rightBlock />
      <Cluster x={288} y={72} n={4} />
      <Cluster x={172} y={178} n={3} a={-22} p={35} />
      <Cluster x={311} y={165} n={3} />
      <Cluster x={300} y={244} n={3} />
      <Cluster x={169} y={296} n={3} a={15} />
      <Cluster x={321} y={329} n={4} a={-15} p={35} />
      <Cluster x={317} y={423} n={4} a={-15} p={35} />
      <Cluster x={329} y={513} n={3} />
      <Cluster x={342} y={613} n={3} a={60} p={35} />
      <Cluster x={255} y={685} n={3} />
      <Dots fill={COLORS.desk} r={6.3} at={[[144, 372], [206, 488]]} />
      <Round x={153} y={428} />
      <Round x={153} y={500} />
      <Conference x={184} y={580} a={-15} w={66} h={26} n={3} />
      <Column at={[[62, 78], [62, 228], [62, 379], [62, 530], [64, 681], [790, 78], [790, 228], [790, 379], [790, 530], [790, 681], [182, 78], [182, 228], [182, 681]]} />
      <Pink
        at={[
          [735, 67], [765, 68], [733, 82], [761, 82], [782, 107], [725, 152], [746, 145], [746, 160], [775, 145], [775, 160],
          ...pinkRow(228, 738, 768), ...pinkRow(302, 736, 768), ...pinkRow(378, 736, 768),
          [736, 455], [778, 455], [726, 528], [760, 513], [760, 547],
          ...pinkRow(604, 736, 771), ...pinkRow(680, 736, 766),
        ]}
      />
    </g>
  );
}

function EastBottom() {
  return (
    <g transform="translate(1020 1530)">
      <Double d="M14 20V172M100 20V172M104 18H222M212 22V172M328 0V92M0 318H560M664 0V172M737 20V172M452 173H672M720 174H980V330M1066 0V252H988V325M1030 328H1104M740 348H1104M820 565H1104M735 596H1104M810 390H876V524H810M730 20H940" />
      <path {...WALL} d="M24 38C30 2 86 2 92 38M24 40V158H52V172M92 40V172M10 181H60M90 181H105M216 92H330M245 95V180M208 181H342M216 134H245M388 92V120M388 150V181H668M388 94H628M448 62V176M571 94V168M458 94V125M658 94V168M720 94H735V172M776 94H948V172M822 94V168M718 181H778M795 181H976M581 182V278M606 278H673M745 216H870M745 216V250M745 275V290M870 206V216M886 181V330M876 216V330M818 206V216M886 216H928V232H886M745 258H802M800 216V330M784 258V328M730 318H762V330H808L820 348H728V332ZM582 318H664V330L672 332L660 336V348H570V332H582ZM584 348V403M810 348V410M810 438V475M810 505V565M570 565H666V585H656V596M570 565V584H582V596M0 596H550M728 565H820V580H808V596H738V580H728ZM435 402H584M435 402V418C416 440 416 470 435 495V511H584V565M481 443H584V471H481ZM173 222V310M124 268H160M845 330H1030M845 330V348M996 566H1034V580H996ZM934 94V176M334 100V178" />
      <path {...WALL} strokeWidth={3} stroke="#a0a0a0" d="M388 94V46L448 62" />
      <path
        {...THIN}
        d={
          rungs(28, 44, 60, 76, 20) + box(118, 28, 90, 126) + rungs(110, 50, 14, 100, 5) + rungs(190, 50, 18, 100, 5) + strip(744, 24, 174, 22, 6) +
          strip(838, 70, 94, 22, 8) + treads(456, 80, 120, 14, 16) + box(784, 96, 26, 16) + box(784, 142, 28, 16) + box(740, 148, 32, 16) +
          box(950, 150, 16, 24) + strip(390, 160, 56, 14, 2) + box(602, 37, 12, 15) + "M673 182V278" + treads(490, 404, 88, 38, 16) +
          treads(499, 474, 80, 36, 16) + strip(122, 222, 38, 88, 2) + rungs(122, 240, 38, 56, 4) + rungs(162, 228, 10, 76, 9) +
          rungs(784, 262, 16, 62, 8) + rungs(964, 220, 14, 106, 9) +
          "M838 258l12 8M836 284l14 -6M906 262l-10 8M930 280l14 6M836 310l14 -6M930 312l12 -6M340 292l10 8l-9 12l-11 -9z" + box(-10, 232, 42, 56)
        }
      />
      <path
        {...THIN}
        stroke="#a8a8a8"
        d={
          [40, 74, 110, 142].map((y) => ring(132, y, 8) + ring(180, y, 8)).join("") +
          [222, 242, 264, 286, 306].map((y) => ring(868, y, 7) + ring(898, y, 7)).join("") +
          [165, 377].map((x) => ring(x, 340, 9) + box(x - 5, 320, 10, 13) + ring(x, 573, 8) + box(x - 5, 581, 10, 14)).join("") +
          ring(420, 76, 7) + ring(755, 143, 7) + ring(1007, 44, 7) + ring(68, 228, 8) + ring(92, 268, 10) + ring(70, 298, 10) + ring(100, 255, 6) +
          ring(100, 282, 6) + ring(480, 457, 6) + strip(824, 334, 20, 13, 3) + strip(1036, 334, 26, 13, 3) + strip(824, 566, 26, 18, 3) +
          strip(968, 566, 94, 18, 7) + box(1012, 155, 40, 32)
        }
      />
      <path {...WALL} strokeWidth={4} d="M58 40V128" />
      <path {...THIN} d="M32 84l6 -12v12l10 -12v10M526 412l12 22l8 -22l-6 22M1015 566v14" />
      <Round x={285} y={134} />
      <Conference x={273} y={260} a={10} w={120} h={32} n={4} />
      <Conference x={468} y={248} w={90} h={30} n={3} />
      <Conference x={626} y={229} w={26} h={26} n={2} />
      <Column at={[[452, 20], [940, 20], [1058, 20], [1058, 172], [1058, 245]]} />
      <Dots fill={COLORS.desk} r={6.3} at={[[433, 75]]} />
      <Dots fill={COLORS.hood} r={7.5} at={[[800, 6], [876, 6], [912, 9]]} />
      <Pink at={[[1007, 85], [1041, 85], [1009, 104], [1034, 160], [1034, 180], [1000, 237], [1036, 237]]} />
    </g>
  );
}

/* glazed link between both wings */
function NorthCourt() {
  const hatch = (x: number, y: number, n: number) => Array.from({ length: n }, (_, i) => `M${x + i * 12} ${y}l8 8h4`).join("");
  return (
    <g>
      <path {...WALL} stroke="#b4b4b4" strokeWidth={4} d="M780 184H955M780 198H1040M820 266H980M820 280H980M1010 266H1345M1010 280H1345M1000 184H1120M1110 198H1350M1255 186H1350" />
      <path {...WALL} strokeWidth={3.5} d="M945 168H1000M945 168V190M1000 168V190M978 168V178M1196 180H1244V194H1196ZM1222 180V194M1104 184V200" />
      <path {...THIN} d={hatch(785, 202, 21) + "M780 213H1040M1110 213H1350" + hatch(1116, 202, 20) + hatch(822, 269, 13) + hatch(1030, 269, 26)} />
      <path {...THIN} stroke="#b0b0b0" d={ring(1058, 276, 8) + ring(1094, 276, 8) + ring(1076, 262, 8) + "M1050 286Q1076 308 1102 286"} />
    </g>
  );
}

/* travel routes between amenities */
function Routes() {
  const red = "#e82a2a";
  const blue = "#2c9be8";
  return (
    <g fill="none" strokeLinejoin="round">
      <g stroke={red} strokeWidth="3">
        <path
          d="M148 1090L195 1110H480L650 1030M148 1108L205 1138L320 1203L435 1290L485 1318L660 1450L700 1480M148 1245L195 1265H615L645 1360M148 1262L230 1300L440 1400L560 1458L670 1465M148 1330L195 1309H660M148 1346L200 1400L350 1418L385 1441H600M140 1549H600L660 1510L700 1465M345 1549L425 1590L480 1613L502 1635L527 1683L570 1723H596L630 1760L660 1768H690L738 1746M560 1160L572 1222L620 1260M665 1195L712 1220V1310M620 1285V1265L645 1355M690 1450L645 1495"
          strokeOpacity="0.6"
        />
        <path d="M1500 870L1530 871H2010M2012 886L1925 1040V1180M1500 870L1505 905L1482 970M1530 871L1525 950L1490 1015" strokeOpacity="0.6" />
      </g>
      <g stroke={red} strokeWidth="4">
        <path d="M645 1350L690 1440L700 1480L765 1615L810 1662L1040 1748L1072 1790" />
        <path d="M1925 1180L1890 1270L1860 1330L1812 1440L1765 1520L1735 1555L1715 1590V1722L1672 1768H1250L1200 1747H760L690 1768L660 1768M930 1702H968L1060 1747" strokeWidth="3.5" />
        <path d="M690 1450L662 1478M1525 950L1485 1020" strokeWidth="3.5" />
      </g>
      <g stroke="#8f78d0" strokeWidth="3.2" strokeOpacity="0.9">
        <path d="M643 1200L700 1305L713 1330V1440L760 1550M1485 1020L1455 1120L1412 1210V1240L1388 1290M1440 1320V1380L1388 1500L1368 1550V1600M765 1620L830 1660L930 1705L1030 1755L1060 1780" />
      </g>
      <g stroke={blue} strokeWidth="3">
        <path d="M645 795L610 880L548 1030L486 1145L433 1200V1225L410 1265L370 1310" strokeWidth="4" />
        <path d="M643 795V1200L700 1305" strokeOpacity="0.9" />
        <path d="M650 795L712 900V980L736 1040V1400L760 1440V1620M565 1250L660 1430" strokeOpacity="0.6" />
        <path d="M1450 395L1411 433V700L1387 740V1510L1368 1550M1411 740L1387 785M1387 1220L1367 1265V1595M1387 1400L1367 1440" strokeOpacity="0.8" />
        <path d="M1600 1060V1100L1578 1140V1190M1637 1030L1620 1080L1600 1110V1155L1563 1230" />
        <path d="M1563 1230L1553 1270V1330L1500 1390L1470 1440L1455 1480L1410 1550L1367 1594" strokeWidth="4" />
        <path d="M1520 945L1485 1000V1015M1435 1070V1120L1412 1210L1387 1240M928 1681H1250" />
      </g>
      <path d="M1430 1520L1404 1560L1367 1595L1310 1622L1255 1670L1200 1720L1150 1750L1078 1782" stroke="#5a90e0" strokeWidth="4.5" />
      <Dots
        fill="#38b0ff"
        r={4.5}
        at={[[643, 973], [643, 1015], [548, 1018], [643, 1163], [736, 1162], [658, 1231], [1387, 1154], [1620, 1073], [1595, 1099], [1390, 1282], [950, 1724], [973, 1738], [1018, 1760], [1085, 1780], [1248, 1680]]}
      />
      <Dots
        fill="#ff2b2b"
        r={4.5}
        at={[[530, 1089], [643, 1072], [250, 1267], [443, 1309], [140, 1549], [1982, 871], [2000, 871], [1925, 1104], [1925, 1112], [1454, 1102], [1390, 1290], [1390, 1327], [700, 1475], [705, 1485], [765, 1619], [785, 1637], [836, 1746], [980, 1741], [1008, 1754], [1093, 1777], [1378, 1769], [1514, 1769], [1550, 1769], [1565, 1769], [1702, 1736]]}
      />
    </g>
  );
}

function Blueprint() {
  return (
    <svg width="1287" height="907" viewBox="633 0 1287 907">
      <g transform="translate(860 130) scale(0.33333)">
        <NorthCourt />
        <WestBottom />
        <EastBottom />
        <WestTop />
        <EastTop />
        <WestMid />
        <EastMid />
        <Routes />
        <Dots
          fill={COLORS.meeting}
          r={10.5}
          at={[[1451, 392], [1441, 1294], [1441, 1368], [1469, 1451], [511, 1756], [621, 1756], [857, 1785], [847, 1669], [977, 1630], [1173, 1631], [1299, 1668], [1288, 1783], [1475, 1778], [1645, 1753], [1797, 1660]]}
        />
        <circle cx="1073" cy="1795" r="16.5" fill={COLORS.hub} />
      </g>
    </svg>
  );
}

/* ---------- bottom toolbar ---------- */

function Slider({ length, knob, height, marks = false }: { length: number; knob: number; height: number; marks?: boolean }) {
  return (
    <svg width={length + 24} height={height} viewBox={`-12 -12 ${length + 24} ${height}`} fill="#fff">
      <rect x="0" y="-2" width={length} height="4" fill="#c4c4c4" />
      <rect x="0" y="-1" width={length} height="2.5" />
      {Array.from({ length: 11 }, (_, i) => (
        <circle key={i} cx={(i * length) / 10} r={i % 10 === 0 ? 6 : 3} />
      ))}
      <circle cx={knob} r="11" />
      {marks && (
        <g fontFamily="'Liberation Sans', Arial, sans-serif" fontSize="24">
          <text x="0" y="28" textAnchor="middle" fontWeight="700">-</text>
          <text x="200" y="28" textAnchor="middle" stroke="#fff" strokeWidth="0.3">+</text>
        </g>
      )}
    </svg>
  );
}

function Tool({ children }: { children: React.ReactNode }) {
  return (
    <button className="h-[50px] w-[49px] rounded-[4px] bg-[#5e5e5e]">
      <svg width="49" height="50" viewBox="-24.5 -25 49 50" fill="none" stroke="#fff" strokeWidth="2" strokeLinejoin="round">
        {children}
      </svg>
    </button>
  );
}

const TURN =
  "M-18.5 -5L-14 -5.8C-10 -13.5 -4 -16 2.5 -16C12 -16 18.6 -8.5 18.6 0.5C18.6 9 12 16 3 15.5C2 15 2.5 14 4 13.7C11 12 15.5 7 15.5 1C15.5 -6 10.5 -10 4 -10C-1.5 -10 -5.5 -7 -7 -2L-1 2L-14.5 14.5Z";
const CRESCENT = "M9 -12C15 -10 18 -5 18 0.5C18 9 12 15.5 4 15C11 13 15.8 8 15.8 1C15.8 -4 13 -9 9 -12Z";

const palette: { kind: Kind; label: string; cls: string }[] = [
  { kind: "hub", label: "Hub", cls: "text-[#ff8514]" },
  { kind: "meeting", label: "Meeting Room", cls: "text-[#ff4bff]" },
  { kind: "desk", label: "Desk", cls: "text-[#faf532]" },
  { kind: "hood", label: "Hood", cls: "text-[#5db244]" },
  { kind: "bench", label: "Bench", cls: "text-[#0048e0]" },
  { kind: "lab", label: "Specialized Lab Space", cls: "text-[#ff6492]" },
];

function Toolbar() {
  return (
    <footer className="flex h-[173px] w-[1287px] bg-[#454545]">
      <button className="flex w-5 items-center justify-center rounded-[4px] bg-[#5e5e5e] pt-[7px] text-[17px] leading-none text-[#d8d8d8]">&gt;</button>
      <section className="w-[365px]">
        <p className="mt-[10px] h-5 pl-[20px] text-center text-[16px] leading-5 tracking-[-0.06px]">Use arrow keys to pan.</p>
        <div className="flex">
          <div className="ml-[18px] flex w-[224px] flex-col items-center pt-[44px]">
            <Slider length={200} knob={20} height={46} marks />
            <span className="text-[25px] leading-[23px]">Zoom</span>
          </div>
          <div className="mt-[31px] ml-8">
            <Tool>
              {[0, 90, 180, 270].map((a) => (
                <path key={a} transform={`rotate(${a})`} d="M-19.5 -19.5L-6.5 -17L-9.8 -12.8L-2 -4.8L-4.8 -2L-12.8 -9.8L-17 -6.5Z" />
              ))}
            </Tool>
          </div>
        </div>
      </section>
      <section className="w-[516px]">
        <p className="mt-[10px] h-5 text-center text-[16px] leading-5 tracking-[-0.06px] whitespace-nowrap">
          Drag and drop onto the blueprint. Right click on nodes to remove.
        </p>
        <div className="mt-[9px] ml-px flex h-[120px] w-[515px] rounded-[4px] bg-[#323232] pt-[14px] pl-[18px]">
          {palette.map((p) => (
            <div key={p.kind} className="flex w-[79.8px] shrink-0 flex-col items-center">
              <svg width="56" height="56" viewBox="-28 -28 56 56">
                <Amenity kind={p.kind} />
              </svg>
              <span className={`mt-[4px] w-[86px] pr-[2px] text-center text-[16px] leading-[15px] ${p.cls}`}>{p.label}</span>
            </div>
          ))}
        </div>
      </section>
      <section className="flex w-[386px] flex-col items-center pt-[14px]">
        <span className="pl-[7px] text-[25px] leading-[30px]">Time</span>
        <div className="mt-[10px] pl-[8px]">
          <Slider length={317} knob={285.3} height={24} />
        </div>
        <div className="mt-[25px] flex gap-[19.5px] pl-[19px]">
          <Tool>
            <path d="M-14.5 -14.5Q-14.5 -18.5 -10.5 -16.8L13.5 -2.5Q17 0 13.5 2.5L-10.5 16.8Q-14.5 18.5 -14.5 14.5Z" />
          </Tool>
          <Tool>
            <path d={TURN} />
            <path d={CRESCENT} fill="#fff" stroke="none" />
          </Tool>
          <Tool>
            <g transform="scale(-1 1)">
              <path d={TURN} />
              <path d={CRESCENT} fill="#fff" stroke="none" />
            </g>
          </Tool>
        </div>
      </section>
    </footer>
  );
}

export default function App() {
  return (
    <div className="flex h-[1080px] w-[1920px] overflow-hidden bg-[#232323] font-['Liberation_Sans',Arial,sans-serif] text-[#fafafa]">
      <Sidebar />
      <main className="flex w-[1287px] flex-col">
        <div className="h-[907px] bg-[#232323]">
          <Blueprint />
        </div>
        <Toolbar />
      </main>
    </div>
  );
}
